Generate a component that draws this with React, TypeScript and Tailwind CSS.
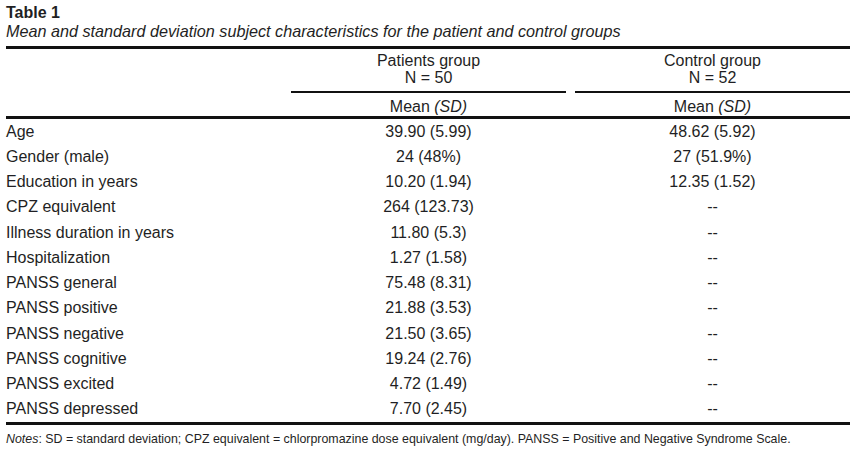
const rows: [string, string, string][] = [
  ["Age", "39.90 (5.99)", "48.62 (5.92)"],
  ["Gender (male)", "24 (48%)", "27 (51.9%)"],
  ["Education in years", "10.20 (1.94)", "12.35 (1.52)"],
  ["CPZ equivalent", "264 (123.73)", "--"],
  ["Illness duration in years", "11.80 (5.3)", "--"],
  ["Hospitalization", "1.27 (1.58)", "--"],
  ["PANSS general", "75.48 (8.31)", "--"],
  ["PANSS positive", "21.88 (3.53)", "--"],
  ["PANSS negative", "21.50 (3.65)", "--"],
  ["PANSS cognitive", "19.24 (2.76)", "--"],
  ["PANSS excited", "4.72 (1.49)", "--"],
  ["PANSS depressed", "7.70 (2.45)", "--"],
];

export default function App() {
  return (
    <div className="w-[855px] h-[454px] bg-white pl-[6px] pr-[5px] pt-[4px] text-[#1f1f24] font-['Liberation_Sans',Arial,sans-serif]">
      <div className="text-[16px] font-bold leading-[18px]">Table 1</div>
      <div className="text-[16.2px] italic leading-[18px]">
        Mean and standard deviation subject characteristics for the patient and control groups
      </div>

      <div className="mt-[6px] border-t-[3px] border-[#111]">
        {/* group headers */}
        <div className="flex pt-[3px] text-[16px] leading-[17px]">
          <div className="w-[285px]" />
          <div className="w-[275px] border-b-2 border-[#111] pb-[5px] text-center">
            <div>Patients group</div>
            <div>N = 50</div>
          </div>
          <div className="w-[9px]" />
          <div className="w-[275px] border-b-2 border-[#111] pb-[5px] text-center">
            <div>Control group</div>
            <div>N = 52</div>
          </div>
        </div>

        <div className="flex border-b-[3px] border-[#111] pt-[5px] pb-[1px] text-[16px] leading-[17px]">
          <div className="w-[285px]" />
          <div className="w-[275px] text-center">
            Mean <span className="italic">(SD)</span>
          </div>
          <div className="w-[9px]" />
          <div className="w-[275px] text-center">
            Mean <span className="italic">(SD)</span>
          </div>
        </div>

        <div className="border-b-[3px] border-[#111]">
          {rows.map(([label, patients, control]) => (
            <div key={label} className="flex h-[25.25px] items-center text-[16px]">
              <div className="w-[285px]">{label}</div>
              <div className="w-[275px] text-center">{patients}</div>
              <div className="w-[9px]" />
              <div className="w-[275px] text-center">{control}</div>
            </div>
          ))}
        </div>
      </div>

      <div className="pt-[7px] text-[12.4px] leading-[14px]">
        <span className="italic">Notes</span>: SD = standard deviation; CPZ equivalent = chlorpromazine dose
        equivalent (mg/day). PANSS = Positive and Negative Syndrome Scale.
      </div>
    </div>
  );
}
